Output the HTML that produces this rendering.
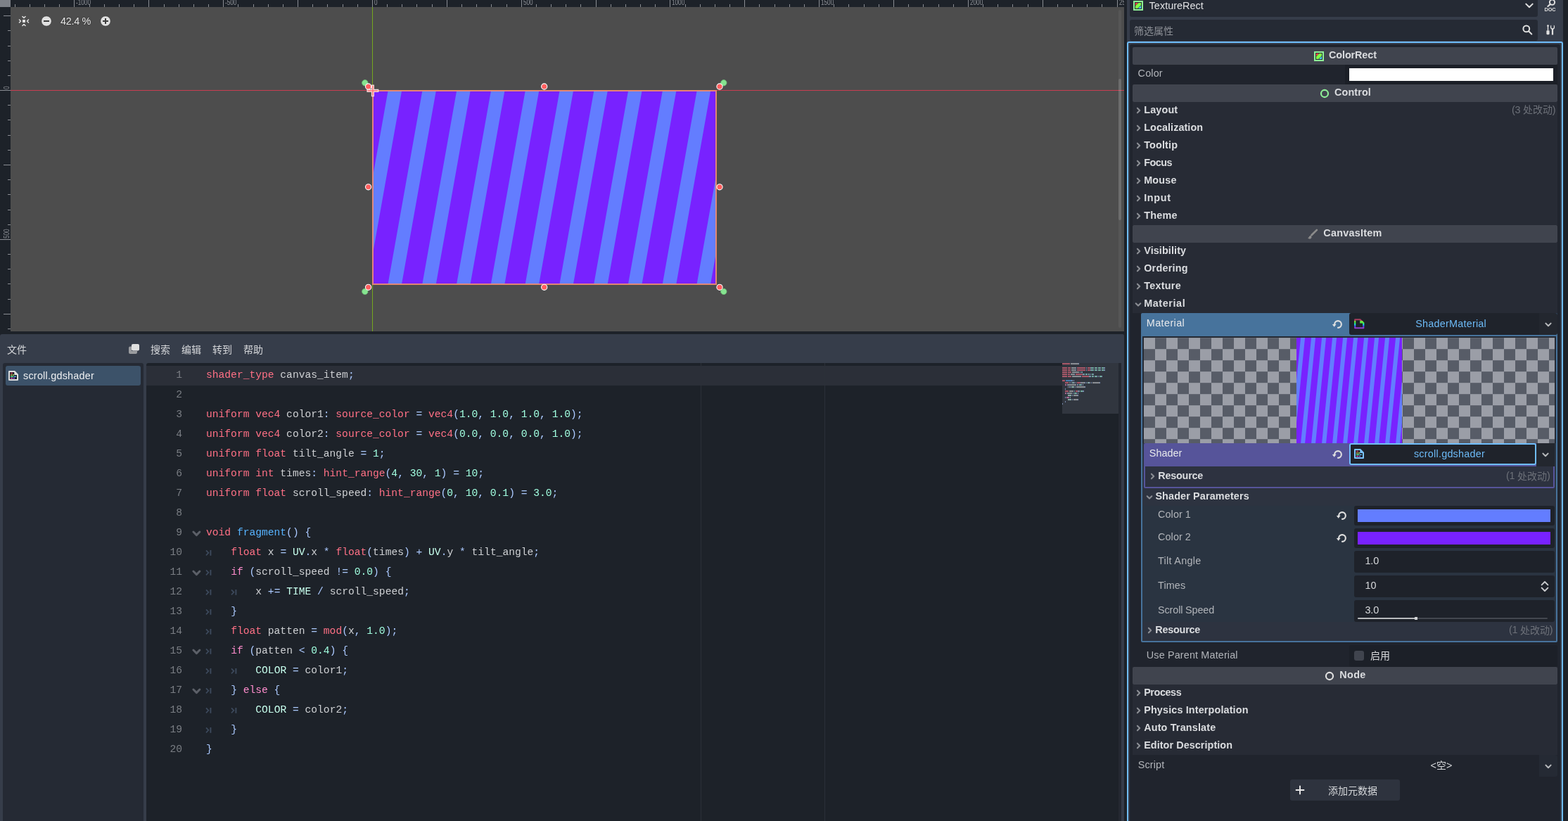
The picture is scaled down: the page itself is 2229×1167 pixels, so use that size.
<!DOCTYPE html>
<html lang="zh"><head><meta charset="utf-8"><title>Godot shader editor</title><style>
html,body{margin:0;padding:0;font-family:"Liberation Sans",sans-serif}
body{width:2229px;height:1167px;overflow:hidden;background:#1d2229;position:relative;font-family:"Liberation Sans",sans-serif}
#r{position:absolute;left:0;top:0;width:2229px;height:1167px;overflow:hidden;will-change:transform}
#r div,#r svg,#r span{position:absolute;box-sizing:border-box}
#r svg{overflow:visible}
#r span span{position:static}
.t{font-family:"Liberation Sans",sans-serif;font-size:14.4px;line-height:16px;white-space:pre}
.m{font-family:"Liberation Mono",monospace;font-size:14.64px;line-height:16px;white-space:pre;color:#cdcfd2}
.rl{font-family:"Liberation Sans",sans-serif;font-size:10px;line-height:10px;color:#8c8f95;transform:scaleX(0.82);transform-origin:0 0;white-space:pre}
.rv{font-family:"Liberation Sans",sans-serif;font-size:10px;line-height:10px;color:#8c8f95;transform:rotate(-90deg) scaleX(0.8);transform-origin:0 0;white-space:pre}
.cj{font-family:"Liberation Sans","Noto Sans CJK SC",sans-serif;font-size:14px}
</style></head><body><div id="r">
<div style="left:0px;top:0px;width:1598px;height:471px;background:#1d2229;"></div>
<div style="left:15px;top:10px;width:1583px;height:461px;background:#4d4d4d;"></div>
<div style="left:0px;top:0px;width:15px;height:10px;background:#7c8087;"></div>
<svg style="left:0px;top:0px;" width="1598" height="10"><g fill="#8a8d93"><rect x="21" y="6" width="1" height="4"/><rect x="42" y="6" width="1" height="4"/><rect x="63" y="6" width="1" height="4"/><rect x="84" y="6" width="1" height="4"/><rect x="105" y="0" width="1" height="10"/><rect x="127" y="6" width="1" height="4"/><rect x="148" y="6" width="1" height="4"/><rect x="169" y="6" width="1" height="4"/><rect x="190" y="6" width="1" height="4"/><rect x="211" y="0" width="1" height="10"/><rect x="233" y="6" width="1" height="4"/><rect x="254" y="6" width="1" height="4"/><rect x="275" y="6" width="1" height="4"/><rect x="296" y="6" width="1" height="4"/><rect x="317" y="0" width="1" height="10"/><rect x="338" y="6" width="1" height="4"/><rect x="360" y="6" width="1" height="4"/><rect x="381" y="6" width="1" height="4"/><rect x="402" y="6" width="1" height="4"/><rect x="423" y="0" width="1" height="10"/><rect x="444" y="6" width="1" height="4"/><rect x="465" y="6" width="1" height="4"/><rect x="487" y="6" width="1" height="4"/><rect x="508" y="6" width="1" height="4"/><rect x="529" y="0" width="1" height="10"/><rect x="550" y="6" width="1" height="4"/><rect x="571" y="6" width="1" height="4"/><rect x="592" y="6" width="1" height="4"/><rect x="614" y="6" width="1" height="4"/><rect x="635" y="0" width="1" height="10"/><rect x="656" y="6" width="1" height="4"/><rect x="677" y="6" width="1" height="4"/><rect x="698" y="6" width="1" height="4"/><rect x="720" y="6" width="1" height="4"/><rect x="741" y="0" width="1" height="10"/><rect x="762" y="6" width="1" height="4"/><rect x="783" y="6" width="1" height="4"/><rect x="804" y="6" width="1" height="4"/><rect x="825" y="6" width="1" height="4"/><rect x="847" y="0" width="1" height="10"/><rect x="868" y="6" width="1" height="4"/><rect x="889" y="6" width="1" height="4"/><rect x="910" y="6" width="1" height="4"/><rect x="931" y="6" width="1" height="4"/><rect x="952" y="0" width="1" height="10"/><rect x="974" y="6" width="1" height="4"/><rect x="995" y="6" width="1" height="4"/><rect x="1016" y="6" width="1" height="4"/><rect x="1037" y="6" width="1" height="4"/><rect x="1058" y="0" width="1" height="10"/><rect x="1079" y="6" width="1" height="4"/><rect x="1101" y="6" width="1" height="4"/><rect x="1122" y="6" width="1" height="4"/><rect x="1143" y="6" width="1" height="4"/><rect x="1164" y="0" width="1" height="10"/><rect x="1185" y="6" width="1" height="4"/><rect x="1206" y="6" width="1" height="4"/><rect x="1228" y="6" width="1" height="4"/><rect x="1249" y="6" width="1" height="4"/><rect x="1270" y="0" width="1" height="10"/><rect x="1291" y="6" width="1" height="4"/><rect x="1312" y="6" width="1" height="4"/><rect x="1334" y="6" width="1" height="4"/><rect x="1355" y="6" width="1" height="4"/><rect x="1376" y="0" width="1" height="10"/><rect x="1397" y="6" width="1" height="4"/><rect x="1418" y="6" width="1" height="4"/><rect x="1439" y="6" width="1" height="4"/><rect x="1461" y="6" width="1" height="4"/><rect x="1482" y="0" width="1" height="10"/><rect x="1503" y="6" width="1" height="4"/><rect x="1524" y="6" width="1" height="4"/><rect x="1545" y="6" width="1" height="4"/><rect x="1566" y="6" width="1" height="4"/><rect x="1588" y="0" width="1" height="10"/></g></svg>
<svg style="left:0px;top:10px;" width="15" height="461"><g fill="#8a8d93" transform="translate(0,-10)"><rect x="5" y="22" width="10" height="1"/><rect x="11" y="43" width="4" height="1"/><rect x="11" y="65" width="4" height="1"/><rect x="11" y="86" width="4" height="1"/><rect x="11" y="107" width="4" height="1"/><rect x="0" y="128" width="15" height="1"/><rect x="11" y="149" width="4" height="1"/><rect x="11" y="170" width="4" height="1"/><rect x="11" y="192" width="4" height="1"/><rect x="11" y="213" width="4" height="1"/><rect x="5" y="234" width="10" height="1"/><rect x="11" y="255" width="4" height="1"/><rect x="11" y="276" width="4" height="1"/><rect x="11" y="298" width="4" height="1"/><rect x="11" y="319" width="4" height="1"/><rect x="0" y="340" width="15" height="1"/><rect x="11" y="361" width="4" height="1"/><rect x="11" y="382" width="4" height="1"/><rect x="11" y="403" width="4" height="1"/><rect x="11" y="425" width="4" height="1"/><rect x="5" y="446" width="10" height="1"/><rect x="11" y="467" width="4" height="1"/></g></svg>
<span class="rl" style="left:108.3px;top:-0.9px">-1000</span>
<span class="rl" style="left:320.3px;top:-0.9px">-500</span>
<span class="rl" style="left:532.3px;top:-0.9px">0</span>
<span class="rl" style="left:744.3px;top:-0.9px">500</span>
<span class="rl" style="left:955.3px;top:-0.9px">1000</span>
<span class="rl" style="left:1167.3px;top:-0.9px">1500</span>
<span class="rl" style="left:1379.3px;top:-0.9px">2000</span>
<span class="rl" style="left:1591.3px;top:-0.9px">2500</span>
<span class="rv" style="left:4.9px;top:127.1px">0</span>
<span class="rv" style="left:4.9px;top:338.8px">500</span>
<div style="left:15px;top:128px;width:1583px;height:1px;background:#c73d52;"></div>
<div style="left:529px;top:10px;width:1px;height:461px;background:#74a81e;"></div>
<svg style="left:529.4px;top:128.6px;overflow:hidden" width="488.8" height="275.6"><rect width="489.84" height="276.41" fill="#7822ff"/><path fill="#637dff" d="M-74.97 0L-55.45 0L-105.21 279.90L-124.73 279.90ZM-26.18 0L-6.67 0L-56.43 279.90L-75.94 279.90ZM22.60 0L42.11 0L-7.65 279.90L-27.16 279.90ZM71.38 0L90.90 0L41.14 279.90L21.62 279.90ZM120.17 0L139.68 0L89.92 279.90L70.41 279.90ZM168.95 0L188.46 0L138.71 279.90L119.19 279.90ZM217.73 0L237.25 0L187.49 279.90L167.98 279.90ZM266.52 0L286.03 0L236.27 279.90L216.76 279.90ZM315.30 0L334.82 0L285.06 279.90L265.54 279.90ZM364.09 0L383.60 0L333.84 279.90L314.33 279.90ZM412.87 0L432.38 0L382.62 279.90L363.11 279.90ZM461.65 0L481.17 0L431.41 279.90L411.89 279.90ZM510.44 0L529.95 0L480.19 279.90L460.68 279.90ZM559.22 0L578.73 0L528.98 279.90L509.46 279.90ZM608.00 0L627.52 0L577.76 279.90L558.25 279.90Z"/></svg>
<div style="left:529px;top:128px;width:490px;height:277px;border:2px solid rgba(238,140,112,0.9)"></div>
<svg style="left:0px;top:0px;" width="1598" height="471"><circle cx="518.8" cy="117.8" r="4.2" fill="#86e490" stroke="#6bbf75" stroke-width="0.8"/><circle cx="1028.8" cy="117.8" r="4.2" fill="#86e490" stroke="#6bbf75" stroke-width="0.8"/><circle cx="518.8" cy="414.4" r="4.2" fill="#86e490" stroke="#6bbf75" stroke-width="0.8"/><circle cx="1028.8" cy="414.4" r="4.2" fill="#86e490" stroke="#6bbf75" stroke-width="0.8"/><circle cx="523.6" cy="123.0" r="4.1" fill="#ff5f5f" stroke="#fff" stroke-width="1.1"/><circle cx="773.7" cy="123.0" r="4.1" fill="#ff5f5f" stroke="#fff" stroke-width="1.1"/><circle cx="1023.0" cy="123.0" r="4.1" fill="#ff5f5f" stroke="#fff" stroke-width="1.1"/><circle cx="523.6" cy="265.8" r="4.1" fill="#ff5f5f" stroke="#fff" stroke-width="1.1"/><circle cx="1023.0" cy="265.8" r="4.1" fill="#ff5f5f" stroke="#fff" stroke-width="1.1"/><circle cx="523.6" cy="408.3" r="4.1" fill="#ff5f5f" stroke="#fff" stroke-width="1.1"/><circle cx="773.7" cy="408.3" r="4.1" fill="#ff5f5f" stroke="#fff" stroke-width="1.1"/><circle cx="1023.0" cy="408.3" r="4.1" fill="#ff5f5f" stroke="#fff" stroke-width="1.1"/><g transform="translate(529.9,128.9)"><path d="M-1.4 -7.8h2.8v6.4h6.4v2.8h-6.4v6.4h-2.8v-6.4h-6.4v-2.8h6.4z" fill="#fb7575" stroke="#f3dcdc" stroke-width="1.3"/></g></svg>
<div style="left:1590px;top:14px;width:4px;height:452px;background:rgba(255,255,255,0.05);border-radius:2px"></div>
<div style="left:1590px;top:112px;width:4px;height:201px;background:rgba(255,255,255,0.14);border-radius:2px"></div>
<svg style="left:26px;top:22px;" width="16" height="16"><g fill="none" stroke="#e0e0e0" stroke-width="1.6" stroke-linecap="round" stroke-linejoin="round"><path d="M6 1.5l2 2l2-2M6 14.5l2-2l2 2M1.5 6l2 2l-2 2M14.5 6l-2 2l2 2"/></g><rect x="6" y="6" width="4" height="4" fill="#e0e0e0"/></svg>
<svg style="left:58px;top:22px;" width="16" height="16"><circle cx="8" cy="8" r="7.3" fill="#e0e0e0" stroke="#3a3a3a" stroke-width="0.8"/><rect x="4" y="7" width="8" height="2" fill="#3c3c3c"/></svg>
<svg style="left:142px;top:22px;" width="16" height="16"><circle cx="8" cy="8" r="7.3" fill="#e0e0e0" stroke="#3a3a3a" stroke-width="0.8"/><path d="M4 7h3v-3h2v3h3v2h-3v3h-2v-3h-3z" fill="#3c3c3c"/></svg>
<span class="t" style="left:86.00px;top:22.00px;color:#e6e6e6;letter-spacing:-0.292px;text-shadow:0 0 1px #333,0 0 2px #333;">42.4 %</span>
<div style="left:0px;top:475px;width:1598px;height:702px;background:#363d4a;border-radius:3px 2px 0 0"></div>
<svg style="left:6.3px;top:484px" width="36" height="27.6"><text class="cj" x="4" y="18" fill="#d4d6d9">文件</text></svg>
<svg style="left:183px;top:489px;" width="15" height="14"><rect x="4" y="0" width="11" height="9.5" rx="2" fill="#e0e0e0"/><rect x="5.5" y="2.6" width="8" height="5.4" fill="#e0e0e0"/><path d="M2 3.5h2v6.5h8v2a2 2 0 0 1-2 2h-8a2 2 0 0 1-2-2v-6.5a2 2 0 0 1 2-2z" fill="#9a9c9f"/></svg>
<svg style="left:210.2px;top:484px" width="36" height="27.6"><text class="cj" x="4" y="18" fill="#d4d6d9">搜索</text></svg>
<svg style="left:254.2px;top:484px" width="36" height="27.6"><text class="cj" x="4" y="18" fill="#d4d6d9">编辑</text></svg>
<svg style="left:298.2px;top:484px" width="36" height="27.6"><text class="cj" x="4" y="18" fill="#d4d6d9">转到</text></svg>
<svg style="left:342.2px;top:484px" width="36" height="27.6"><text class="cj" x="4" y="18" fill="#d4d6d9">帮助</text></svg>
<div style="left:4px;top:516px;width:200px;height:661px;background:#252a34;border-radius:3px"></div>
<div style="left:8px;top:520px;width:192px;height:27.7px;background:#3c5269;border-radius:3px"></div>
<svg style="left:12px;top:527px;" width="14" height="14"><path d="M1 1h7.6l4.4 4.4v7.6h-12z" fill="#1b1f27" stroke="#e0e0e0" stroke-width="2" stroke-linejoin="round"/><path d="M8.3 1v5h5z" fill="#e0e0e0"/><rect x="3" y="2.8" width="3.2" height="1.3" fill="#d04560"/><rect x="3" y="5.3" width="2" height="1.3" fill="#ffca5f"/><rect x="5.6" y="5.3" width="2.4" height="1.3" fill="#c5ef5f"/><rect x="3" y="7.6" width="4" height="1.3" fill="#5fffa5"/><rect x="7.6" y="7.6" width="3.2" height="1.3" fill="#5fc8ff"/><rect x="3" y="9.9" width="3" height="1.3" fill="#ff5fc8"/><rect x="6.6" y="9.9" width="2.4" height="1.3" fill="#9f5fff"/></svg>
<span class="t" style="left:33.00px;top:526.30px;color:#eceef0;letter-spacing:0.233px;">scroll.gdshader</span>
<div style="left:208px;top:516px;width:1386px;height:661px;background:#1d2229;border-radius:3px 3px 0 0"></div>
<div style="left:208px;top:520px;width:1302px;height:28px;background:#2b2f38;"></div>
<div style="left:996px;top:516px;width:1px;height:651px;background:#2b3038;"></div>
<div style="left:1172px;top:516px;width:1px;height:651px;background:#2b3038;"></div>
<div style="left:1590px;top:516px;width:4px;height:651px;background:#242831;"></div>
<span class="m" style="left:250.31px;top:525.00px;color:#7a7e84">1</span>
<span class="m" style="left:293.00px;top:525.00px"><span style="color:#ff7085">shader_type</span> <span style="color:#cdcfd2">canvas_item</span><span style="color:#abc9ff">;</span></span>
<span class="m" style="left:250.31px;top:553.00px;color:#7a7e84">2</span>
<span class="m" style="left:250.31px;top:581.00px;color:#7a7e84">3</span>
<span class="m" style="left:293.00px;top:581.00px"><span style="color:#ff7085">uniform</span> <span style="color:#ff7085">vec4</span> <span style="color:#cdcfd2">color1</span><span style="color:#abc9ff">:</span> <span style="color:#ff7085">source_color</span> <span style="color:#abc9ff">=</span> <span style="color:#ff7085">vec4</span><span style="color:#abc9ff">(</span><span style="color:#a1ffe0">1.0</span><span style="color:#abc9ff">,</span> <span style="color:#a1ffe0">1.0</span><span style="color:#abc9ff">,</span> <span style="color:#a1ffe0">1.0</span><span style="color:#abc9ff">,</span> <span style="color:#a1ffe0">1.0</span><span style="color:#abc9ff">)</span><span style="color:#abc9ff">;</span></span>
<span class="m" style="left:250.31px;top:609.00px;color:#7a7e84">4</span>
<span class="m" style="left:293.00px;top:609.00px"><span style="color:#ff7085">uniform</span> <span style="color:#ff7085">vec4</span> <span style="color:#cdcfd2">color2</span><span style="color:#abc9ff">:</span> <span style="color:#ff7085">source_color</span> <span style="color:#abc9ff">=</span> <span style="color:#ff7085">vec4</span><span style="color:#abc9ff">(</span><span style="color:#a1ffe0">0.0</span><span style="color:#abc9ff">,</span> <span style="color:#a1ffe0">0.0</span><span style="color:#abc9ff">,</span> <span style="color:#a1ffe0">0.0</span><span style="color:#abc9ff">,</span> <span style="color:#a1ffe0">1.0</span><span style="color:#abc9ff">)</span><span style="color:#abc9ff">;</span></span>
<span class="m" style="left:250.31px;top:637.00px;color:#7a7e84">5</span>
<span class="m" style="left:293.00px;top:637.00px"><span style="color:#ff7085">uniform</span> <span style="color:#ff7085">float</span> <span style="color:#cdcfd2">tilt_angle</span> <span style="color:#abc9ff">=</span> <span style="color:#a1ffe0">1</span><span style="color:#abc9ff">;</span></span>
<span class="m" style="left:250.31px;top:665.00px;color:#7a7e84">6</span>
<span class="m" style="left:293.00px;top:665.00px"><span style="color:#ff7085">uniform</span> <span style="color:#ff7085">int</span> <span style="color:#cdcfd2">times</span><span style="color:#abc9ff">:</span> <span style="color:#ff7085">hint_range</span><span style="color:#abc9ff">(</span><span style="color:#a1ffe0">4</span><span style="color:#abc9ff">,</span> <span style="color:#a1ffe0">30</span><span style="color:#abc9ff">,</span> <span style="color:#a1ffe0">1</span><span style="color:#abc9ff">)</span> <span style="color:#abc9ff">=</span> <span style="color:#a1ffe0">10</span><span style="color:#abc9ff">;</span></span>
<span class="m" style="left:250.31px;top:693.00px;color:#7a7e84">7</span>
<span class="m" style="left:293.00px;top:693.00px"><span style="color:#ff7085">uniform</span> <span style="color:#ff7085">float</span> <span style="color:#cdcfd2">scroll_speed</span><span style="color:#abc9ff">:</span> <span style="color:#ff7085">hint_range</span><span style="color:#abc9ff">(</span><span style="color:#a1ffe0">0</span><span style="color:#abc9ff">,</span> <span style="color:#a1ffe0">10</span><span style="color:#abc9ff">,</span> <span style="color:#a1ffe0">0.1</span><span style="color:#abc9ff">)</span> <span style="color:#abc9ff">=</span> <span style="color:#a1ffe0">3.0</span><span style="color:#abc9ff">;</span></span>
<span class="m" style="left:250.31px;top:721.00px;color:#7a7e84">8</span>
<span class="m" style="left:250.31px;top:749.00px;color:#7a7e84">9</span>
<svg style="left:273.3px;top:754.2px;" width="13" height="9"><path d="M1.9 2l4.5 4.6l4.5-4.6" fill="none" stroke="#5c6068" stroke-width="3" stroke-linecap="round" stroke-linejoin="round"/></svg>
<span class="m" style="left:293.00px;top:749.00px"><span style="color:#ff7085">void</span> <span style="color:#57b3ff">fragment</span><span style="color:#abc9ff">(</span><span style="color:#abc9ff">)</span> <span style="color:#abc9ff">{</span></span>
<span class="m" style="left:241.53px;top:777.00px;color:#7a7e84">10</span>
<svg style="left:292.4px;top:781px;" width="10" height="10"><path d="M1 1.3l3.4 3.5l-3.4 3.5" fill="none" stroke="#3d4a5d" stroke-width="1.7"/><path d="M7.4 1v7.8" stroke="#3d4a5d" stroke-width="1.9"/></svg>
<span class="m" style="left:328.15px;top:777.00px"><span style="color:#ff7085">float</span> <span style="color:#cdcfd2">x</span> <span style="color:#abc9ff">=</span> <span style="color:#c7ffed">UV</span><span style="color:#abc9ff">.</span><span style="color:#cdcfd2">x</span> <span style="color:#abc9ff">*</span> <span style="color:#ff7085">float</span><span style="color:#abc9ff">(</span><span style="color:#cdcfd2">times</span><span style="color:#abc9ff">)</span> <span style="color:#abc9ff">+</span> <span style="color:#c7ffed">UV</span><span style="color:#abc9ff">.</span><span style="color:#cdcfd2">y</span> <span style="color:#abc9ff">*</span> <span style="color:#cdcfd2">tilt_angle</span><span style="color:#abc9ff">;</span></span>
<span class="m" style="left:241.53px;top:805.00px;color:#7a7e84">11</span>
<svg style="left:273.3px;top:810.2px;" width="13" height="9"><path d="M1.9 2l4.5 4.6l4.5-4.6" fill="none" stroke="#5c6068" stroke-width="3" stroke-linecap="round" stroke-linejoin="round"/></svg>
<svg style="left:292.4px;top:809px;" width="10" height="10"><path d="M1 1.3l3.4 3.5l-3.4 3.5" fill="none" stroke="#3d4a5d" stroke-width="1.7"/><path d="M7.4 1v7.8" stroke="#3d4a5d" stroke-width="1.9"/></svg>
<span class="m" style="left:328.15px;top:805.00px"><span style="color:#ff8ccc">if</span> <span style="color:#abc9ff">(</span><span style="color:#cdcfd2">scroll_speed</span> <span style="color:#abc9ff">!</span><span style="color:#abc9ff">=</span> <span style="color:#a1ffe0">0.0</span><span style="color:#abc9ff">)</span> <span style="color:#abc9ff">{</span></span>
<span class="m" style="left:241.53px;top:833.00px;color:#7a7e84">12</span>
<svg style="left:292.4px;top:837px;" width="10" height="10"><path d="M1 1.3l3.4 3.5l-3.4 3.5" fill="none" stroke="#3d4a5d" stroke-width="1.7"/><path d="M7.4 1v7.8" stroke="#3d4a5d" stroke-width="1.9"/></svg>
<svg style="left:327.548px;top:837px;" width="10" height="10"><path d="M1 1.3l3.4 3.5l-3.4 3.5" fill="none" stroke="#3d4a5d" stroke-width="1.7"/><path d="M7.4 1v7.8" stroke="#3d4a5d" stroke-width="1.9"/></svg>
<span class="m" style="left:363.30px;top:833.00px"><span style="color:#cdcfd2">x</span> <span style="color:#abc9ff">+</span><span style="color:#abc9ff">=</span> <span style="color:#c7ffed">TIME</span> <span style="color:#abc9ff">/</span> <span style="color:#cdcfd2">scroll_speed</span><span style="color:#abc9ff">;</span></span>
<span class="m" style="left:241.53px;top:861.00px;color:#7a7e84">13</span>
<svg style="left:292.4px;top:865px;" width="10" height="10"><path d="M1 1.3l3.4 3.5l-3.4 3.5" fill="none" stroke="#3d4a5d" stroke-width="1.7"/><path d="M7.4 1v7.8" stroke="#3d4a5d" stroke-width="1.9"/></svg>
<span class="m" style="left:328.15px;top:861.00px"><span style="color:#abc9ff">}</span></span>
<span class="m" style="left:241.53px;top:889.00px;color:#7a7e84">14</span>
<svg style="left:292.4px;top:893px;" width="10" height="10"><path d="M1 1.3l3.4 3.5l-3.4 3.5" fill="none" stroke="#3d4a5d" stroke-width="1.7"/><path d="M7.4 1v7.8" stroke="#3d4a5d" stroke-width="1.9"/></svg>
<span class="m" style="left:328.15px;top:889.00px"><span style="color:#ff7085">float</span> <span style="color:#cdcfd2">patten</span> <span style="color:#abc9ff">=</span> <span style="color:#ff7085">mod</span><span style="color:#abc9ff">(</span><span style="color:#cdcfd2">x</span><span style="color:#abc9ff">,</span> <span style="color:#a1ffe0">1.0</span><span style="color:#abc9ff">)</span><span style="color:#abc9ff">;</span></span>
<span class="m" style="left:241.53px;top:917.00px;color:#7a7e84">15</span>
<svg style="left:273.3px;top:922.2px;" width="13" height="9"><path d="M1.9 2l4.5 4.6l4.5-4.6" fill="none" stroke="#5c6068" stroke-width="3" stroke-linecap="round" stroke-linejoin="round"/></svg>
<svg style="left:292.4px;top:921px;" width="10" height="10"><path d="M1 1.3l3.4 3.5l-3.4 3.5" fill="none" stroke="#3d4a5d" stroke-width="1.7"/><path d="M7.4 1v7.8" stroke="#3d4a5d" stroke-width="1.9"/></svg>
<span class="m" style="left:328.15px;top:917.00px"><span style="color:#ff8ccc">if</span> <span style="color:#abc9ff">(</span><span style="color:#cdcfd2">patten</span> <span style="color:#abc9ff">&lt;</span> <span style="color:#a1ffe0">0.4</span><span style="color:#abc9ff">)</span> <span style="color:#abc9ff">{</span></span>
<span class="m" style="left:241.53px;top:945.00px;color:#7a7e84">16</span>
<svg style="left:292.4px;top:949px;" width="10" height="10"><path d="M1 1.3l3.4 3.5l-3.4 3.5" fill="none" stroke="#3d4a5d" stroke-width="1.7"/><path d="M7.4 1v7.8" stroke="#3d4a5d" stroke-width="1.9"/></svg>
<svg style="left:327.548px;top:949px;" width="10" height="10"><path d="M1 1.3l3.4 3.5l-3.4 3.5" fill="none" stroke="#3d4a5d" stroke-width="1.7"/><path d="M7.4 1v7.8" stroke="#3d4a5d" stroke-width="1.9"/></svg>
<span class="m" style="left:363.30px;top:945.00px"><span style="color:#c7ffed">COLOR</span> <span style="color:#abc9ff">=</span> <span style="color:#cdcfd2">color1</span><span style="color:#abc9ff">;</span></span>
<span class="m" style="left:241.53px;top:973.00px;color:#7a7e84">17</span>
<svg style="left:273.3px;top:978.2px;" width="13" height="9"><path d="M1.9 2l4.5 4.6l4.5-4.6" fill="none" stroke="#5c6068" stroke-width="3" stroke-linecap="round" stroke-linejoin="round"/></svg>
<svg style="left:292.4px;top:977px;" width="10" height="10"><path d="M1 1.3l3.4 3.5l-3.4 3.5" fill="none" stroke="#3d4a5d" stroke-width="1.7"/><path d="M7.4 1v7.8" stroke="#3d4a5d" stroke-width="1.9"/></svg>
<span class="m" style="left:328.15px;top:973.00px"><span style="color:#abc9ff">}</span> <span style="color:#ff8ccc">else</span> <span style="color:#abc9ff">{</span></span>
<span class="m" style="left:241.53px;top:1001.00px;color:#7a7e84">18</span>
<svg style="left:292.4px;top:1005px;" width="10" height="10"><path d="M1 1.3l3.4 3.5l-3.4 3.5" fill="none" stroke="#3d4a5d" stroke-width="1.7"/><path d="M7.4 1v7.8" stroke="#3d4a5d" stroke-width="1.9"/></svg>
<svg style="left:327.548px;top:1005px;" width="10" height="10"><path d="M1 1.3l3.4 3.5l-3.4 3.5" fill="none" stroke="#3d4a5d" stroke-width="1.7"/><path d="M7.4 1v7.8" stroke="#3d4a5d" stroke-width="1.9"/></svg>
<span class="m" style="left:363.30px;top:1001.00px"><span style="color:#c7ffed">COLOR</span> <span style="color:#abc9ff">=</span> <span style="color:#cdcfd2">color2</span><span style="color:#abc9ff">;</span></span>
<span class="m" style="left:241.53px;top:1029.00px;color:#7a7e84">19</span>
<svg style="left:292.4px;top:1033px;" width="10" height="10"><path d="M1 1.3l3.4 3.5l-3.4 3.5" fill="none" stroke="#3d4a5d" stroke-width="1.7"/><path d="M7.4 1v7.8" stroke="#3d4a5d" stroke-width="1.9"/></svg>
<span class="m" style="left:328.15px;top:1029.00px"><span style="color:#abc9ff">}</span></span>
<span class="m" style="left:241.53px;top:1057.00px;color:#7a7e84">20</span>
<span class="m" style="left:293.00px;top:1057.00px"><span style="color:#abc9ff">}</span></span>
<div style="left:1510px;top:516px;width:80px;height:72px;background:#31363f;"></div>
<svg style="left:1510px;top:516px;" width="80" height="72"><g opacity="0.6"><rect x="0" y="0.1" width="11" height="2" fill="#ff7085"/><rect x="12" y="0.1" width="11" height="2" fill="#cdcfd2"/><rect x="23" y="0.1" width="1" height="2" fill="#abc9ff"/><rect x="0" y="6.1" width="7" height="2" fill="#ff7085"/><rect x="8" y="6.1" width="4" height="2" fill="#ff7085"/><rect x="13" y="6.1" width="6" height="2" fill="#cdcfd2"/><rect x="19" y="6.1" width="1" height="2" fill="#abc9ff"/><rect x="21" y="6.1" width="12" height="2" fill="#ff7085"/><rect x="34" y="6.1" width="1" height="2" fill="#abc9ff"/><rect x="36" y="6.1" width="4" height="2" fill="#ff7085"/><rect x="40" y="6.1" width="1" height="2" fill="#abc9ff"/><rect x="41" y="6.1" width="3" height="2" fill="#a1ffe0"/><rect x="44" y="6.1" width="1" height="2" fill="#abc9ff"/><rect x="46" y="6.1" width="3" height="2" fill="#a1ffe0"/><rect x="49" y="6.1" width="1" height="2" fill="#abc9ff"/><rect x="51" y="6.1" width="3" height="2" fill="#a1ffe0"/><rect x="54" y="6.1" width="1" height="2" fill="#abc9ff"/><rect x="56" y="6.1" width="3" height="2" fill="#a1ffe0"/><rect x="59" y="6.1" width="1" height="2" fill="#abc9ff"/><rect x="60" y="6.1" width="1" height="2" fill="#abc9ff"/><rect x="0" y="9.1" width="7" height="2" fill="#ff7085"/><rect x="8" y="9.1" width="4" height="2" fill="#ff7085"/><rect x="13" y="9.1" width="6" height="2" fill="#cdcfd2"/><rect x="19" y="9.1" width="1" height="2" fill="#abc9ff"/><rect x="21" y="9.1" width="12" height="2" fill="#ff7085"/><rect x="34" y="9.1" width="1" height="2" fill="#abc9ff"/><rect x="36" y="9.1" width="4" height="2" fill="#ff7085"/><rect x="40" y="9.1" width="1" height="2" fill="#abc9ff"/><rect x="41" y="9.1" width="3" height="2" fill="#a1ffe0"/><rect x="44" y="9.1" width="1" height="2" fill="#abc9ff"/><rect x="46" y="9.1" width="3" height="2" fill="#a1ffe0"/><rect x="49" y="9.1" width="1" height="2" fill="#abc9ff"/><rect x="51" y="9.1" width="3" height="2" fill="#a1ffe0"/><rect x="54" y="9.1" width="1" height="2" fill="#abc9ff"/><rect x="56" y="9.1" width="3" height="2" fill="#a1ffe0"/><rect x="59" y="9.1" width="1" height="2" fill="#abc9ff"/><rect x="60" y="9.1" width="1" height="2" fill="#abc9ff"/><rect x="0" y="12.1" width="7" height="2" fill="#ff7085"/><rect x="8" y="12.1" width="5" height="2" fill="#ff7085"/><rect x="14" y="12.1" width="10" height="2" fill="#cdcfd2"/><rect x="25" y="12.1" width="1" height="2" fill="#abc9ff"/><rect x="27" y="12.1" width="1" height="2" fill="#a1ffe0"/><rect x="28" y="12.1" width="1" height="2" fill="#abc9ff"/><rect x="0" y="15.1" width="7" height="2" fill="#ff7085"/><rect x="8" y="15.1" width="3" height="2" fill="#ff7085"/><rect x="12" y="15.1" width="5" height="2" fill="#cdcfd2"/><rect x="17" y="15.1" width="1" height="2" fill="#abc9ff"/><rect x="19" y="15.1" width="10" height="2" fill="#ff7085"/><rect x="29" y="15.1" width="1" height="2" fill="#abc9ff"/><rect x="30" y="15.1" width="1" height="2" fill="#a1ffe0"/><rect x="31" y="15.1" width="1" height="2" fill="#abc9ff"/><rect x="33" y="15.1" width="2" height="2" fill="#a1ffe0"/><rect x="35" y="15.1" width="1" height="2" fill="#abc9ff"/><rect x="37" y="15.1" width="1" height="2" fill="#a1ffe0"/><rect x="38" y="15.1" width="1" height="2" fill="#abc9ff"/><rect x="40" y="15.1" width="1" height="2" fill="#abc9ff"/><rect x="42" y="15.1" width="2" height="2" fill="#a1ffe0"/><rect x="44" y="15.1" width="1" height="2" fill="#abc9ff"/><rect x="0" y="18.1" width="7" height="2" fill="#ff7085"/><rect x="8" y="18.1" width="5" height="2" fill="#ff7085"/><rect x="14" y="18.1" width="12" height="2" fill="#cdcfd2"/><rect x="26" y="18.1" width="1" height="2" fill="#abc9ff"/><rect x="28" y="18.1" width="10" height="2" fill="#ff7085"/><rect x="38" y="18.1" width="1" height="2" fill="#abc9ff"/><rect x="39" y="18.1" width="1" height="2" fill="#a1ffe0"/><rect x="40" y="18.1" width="1" height="2" fill="#abc9ff"/><rect x="42" y="18.1" width="2" height="2" fill="#a1ffe0"/><rect x="44" y="18.1" width="1" height="2" fill="#abc9ff"/><rect x="46" y="18.1" width="3" height="2" fill="#a1ffe0"/><rect x="49" y="18.1" width="1" height="2" fill="#abc9ff"/><rect x="51" y="18.1" width="1" height="2" fill="#abc9ff"/><rect x="53" y="18.1" width="3" height="2" fill="#a1ffe0"/><rect x="56" y="18.1" width="1" height="2" fill="#abc9ff"/><rect x="0" y="24.1" width="4" height="2" fill="#ff7085"/><rect x="5" y="24.1" width="8" height="2" fill="#57b3ff"/><rect x="13" y="24.1" width="1" height="2" fill="#abc9ff"/><rect x="14" y="24.1" width="1" height="2" fill="#abc9ff"/><rect x="16" y="24.1" width="1" height="2" fill="#abc9ff"/><rect x="4" y="27.1" width="5" height="2" fill="#ff7085"/><rect x="10" y="27.1" width="1" height="2" fill="#cdcfd2"/><rect x="12" y="27.1" width="1" height="2" fill="#abc9ff"/><rect x="14" y="27.1" width="2" height="2" fill="#c7ffed"/><rect x="16" y="27.1" width="1" height="2" fill="#abc9ff"/><rect x="17" y="27.1" width="1" height="2" fill="#cdcfd2"/><rect x="19" y="27.1" width="1" height="2" fill="#abc9ff"/><rect x="21" y="27.1" width="5" height="2" fill="#ff7085"/><rect x="26" y="27.1" width="1" height="2" fill="#abc9ff"/><rect x="27" y="27.1" width="5" height="2" fill="#cdcfd2"/><rect x="32" y="27.1" width="1" height="2" fill="#abc9ff"/><rect x="34" y="27.1" width="1" height="2" fill="#abc9ff"/><rect x="36" y="27.1" width="2" height="2" fill="#c7ffed"/><rect x="38" y="27.1" width="1" height="2" fill="#abc9ff"/><rect x="39" y="27.1" width="1" height="2" fill="#cdcfd2"/><rect x="41" y="27.1" width="1" height="2" fill="#abc9ff"/><rect x="43" y="27.1" width="10" height="2" fill="#cdcfd2"/><rect x="53" y="27.1" width="1" height="2" fill="#abc9ff"/><rect x="4" y="30.1" width="2" height="2" fill="#ff8ccc"/><rect x="7" y="30.1" width="1" height="2" fill="#abc9ff"/><rect x="8" y="30.1" width="12" height="2" fill="#cdcfd2"/><rect x="21" y="30.1" width="1" height="2" fill="#abc9ff"/><rect x="22" y="30.1" width="1" height="2" fill="#abc9ff"/><rect x="24" y="30.1" width="3" height="2" fill="#a1ffe0"/><rect x="27" y="30.1" width="1" height="2" fill="#abc9ff"/><rect x="29" y="30.1" width="1" height="2" fill="#abc9ff"/><rect x="8" y="33.1" width="1" height="2" fill="#cdcfd2"/><rect x="10" y="33.1" width="1" height="2" fill="#abc9ff"/><rect x="11" y="33.1" width="1" height="2" fill="#abc9ff"/><rect x="13" y="33.1" width="4" height="2" fill="#c7ffed"/><rect x="18" y="33.1" width="1" height="2" fill="#abc9ff"/><rect x="20" y="33.1" width="12" height="2" fill="#cdcfd2"/><rect x="32" y="33.1" width="1" height="2" fill="#abc9ff"/><rect x="4" y="36.1" width="1" height="2" fill="#abc9ff"/><rect x="4" y="39.1" width="5" height="2" fill="#ff7085"/><rect x="10" y="39.1" width="6" height="2" fill="#cdcfd2"/><rect x="17" y="39.1" width="1" height="2" fill="#abc9ff"/><rect x="19" y="39.1" width="3" height="2" fill="#ff7085"/><rect x="22" y="39.1" width="1" height="2" fill="#abc9ff"/><rect x="23" y="39.1" width="1" height="2" fill="#cdcfd2"/><rect x="24" y="39.1" width="1" height="2" fill="#abc9ff"/><rect x="26" y="39.1" width="3" height="2" fill="#a1ffe0"/><rect x="29" y="39.1" width="1" height="2" fill="#abc9ff"/><rect x="30" y="39.1" width="1" height="2" fill="#abc9ff"/><rect x="4" y="42.1" width="2" height="2" fill="#ff8ccc"/><rect x="7" y="42.1" width="1" height="2" fill="#abc9ff"/><rect x="8" y="42.1" width="6" height="2" fill="#cdcfd2"/><rect x="15" y="42.1" width="1" height="2" fill="#abc9ff"/><rect x="17" y="42.1" width="3" height="2" fill="#a1ffe0"/><rect x="20" y="42.1" width="1" height="2" fill="#abc9ff"/><rect x="22" y="42.1" width="1" height="2" fill="#abc9ff"/><rect x="8" y="45.1" width="5" height="2" fill="#c7ffed"/><rect x="14" y="45.1" width="1" height="2" fill="#abc9ff"/><rect x="16" y="45.1" width="6" height="2" fill="#cdcfd2"/><rect x="22" y="45.1" width="1" height="2" fill="#abc9ff"/><rect x="4" y="48.1" width="1" height="2" fill="#abc9ff"/><rect x="6" y="48.1" width="4" height="2" fill="#ff8ccc"/><rect x="11" y="48.1" width="1" height="2" fill="#abc9ff"/><rect x="8" y="51.1" width="5" height="2" fill="#c7ffed"/><rect x="14" y="51.1" width="1" height="2" fill="#abc9ff"/><rect x="16" y="51.1" width="6" height="2" fill="#cdcfd2"/><rect x="22" y="51.1" width="1" height="2" fill="#abc9ff"/><rect x="4" y="54.1" width="1" height="2" fill="#abc9ff"/><rect x="0" y="57.1" width="1" height="2" fill="#abc9ff"/></g></svg>
<div style="left:1602px;top:0px;width:620px;height:1167px;background:#363d4a;"></div>
<div style="left:1606px;top:-6px;width:580px;height:29.7px;background:#252a34;border-radius:3px"></div>
<div style="left:1606px;top:28.2px;width:580px;height:30.2px;background:#252a34;border-radius:3px"></div>
<svg style="left:1611px;top:1.3px;" width="14" height="14"><rect x="1" y="1" width="12" height="12" fill="#2b2f38" stroke="#8eef97" stroke-width="2"/><path d="M3 3h4l-4 4z" fill="#ff4545"/><path d="M7.6 3h3.4v3.2l-4.8 4.8h-3.2v-3.4z" fill="#80ff45"/><path d="M11 7v4h-4z" fill="#45d7ff"/></svg>
<span class="t" style="left:1633.60px;top:0.00px;color:#dfe0e2;letter-spacing:0.048px;">TextureRect</span>
<svg style="left:2168px;top:4px;" width="12" height="9"><path d="M1.3 1.6l4.7 4.7l4.7-4.7" fill="none" stroke="#e0e0e0" stroke-width="2" stroke-linecap="round" stroke-linejoin="round"/></svg>
<svg style="left:2195px;top:-2px;" width="18" height="19"><circle cx="11.5" cy="5.2" r="3.6" fill="none" stroke="#e0e0e0" stroke-width="2"/><path d="M8.8 8l-3.4 3" stroke="#e0e0e0" stroke-width="2.2" stroke-linecap="round"/><text x="0.6" y="17.6" font-family="Liberation Sans" font-weight="700" font-size="7.2" fill="#e0e0e0" letter-spacing="-0.1">DOC</text></svg>
<svg style="left:1608.4px;top:31px" width="64" height="27.6"><text class="cj" x="4" y="18" fill="#8d9097">筛选属性</text></svg>
<svg style="left:2163px;top:34px;" width="16" height="16"><circle cx="6.8" cy="6.9" r="4.4" fill="none" stroke="#e0e0e0" stroke-width="2"/><path d="M10 10.2l4.3 4.3" stroke="#e0e0e0" stroke-width="2" stroke-linecap="round"/></svg>
<svg style="left:2197px;top:35px;" width="14" height="16"><g fill="#e0e0e0"><path d="M2.2 1l1.3-1l1.3 1v1.5h-0.6v6h1.4v4.2a1.6 1.6 0 0 1-1.6 1.6h-1a1.6 1.6 0 0 1-1.6-1.6v-4.2h1.4v-6h-0.6z"/><path d="M8.2 0.6v3.6l1 1h1.6l1-1v-3.6l1.2 1.2v3.2l-1.9 1.9v7.6h-2.2v-7.6l-1.9-1.9v-3.2z"/></g></svg>
<div style="left:1602px;top:59px;width:620px;height:1167px;border:2px solid #6fbdfb;border-radius:3px;background:#363d4a"></div>
<div style="left:1605.6px;top:62.6px;width:612.4px;height:1167px;background:#20242d;border-radius:2px"></div>
<div style="left:1610px;top:66.7px;width:604px;height:25.3px;background:#40444e;border-radius:2px"></div>
<svg style="left:1868.2px;top:72.9px" width="14" height="14"><rect x="1" y="1" width="12" height="12" fill="#2b2f38" stroke="#8eef97" stroke-width="2"/><path d="M3 3h4l-4 4z" fill="#ff4545"/><path d="M7.6 3h3.4v3.2l-4.8 4.8h-3.2v-3.4z" fill="#80ff45"/><path d="M11 7v4h-4z" fill="#45d7ff"/></svg><span class="t" style="left:1889.07px;top:69.90px;color:#dadcdf;font-weight:700;letter-spacing:-0.111px;">ColorRect</span>
<div style="left:1610px;top:92px;width:302px;height:27.8px;background:#20242d;"></div>
<div style="left:1912px;top:92px;width:302px;height:27.8px;background:#1b1f27;"></div>
<span class="t" style="left:1617.60px;top:96.40px;color:#b1b4b9;letter-spacing:0.159px;">Color</span>
<div style="left:1918px;top:97px;width:290px;height:18px;background:#ffffff;"></div>
<div style="left:1610px;top:119.8px;width:604px;height:25.2px;background:#40444e;border-radius:2px"></div>
<svg style="left:1875.1px;top:125.0px" width="16" height="16"><circle cx="8" cy="8" r="5.05" fill="none" stroke="#8eef97" stroke-width="2.2"/></svg><span class="t" style="left:1897.04px;top:123.00px;color:#dadcdf;font-weight:700;letter-spacing:0.096px;">Control</span>
<div style="left:1610px;top:145px;width:604px;height:25px;background:#272b35;"></div>
<svg style="left:1615px;top:151.7px;" width="7" height="10"><path d="M1.9 1.7l3.3 3.3l-3.3 3.3" fill="none" stroke="#8b8e94" stroke-width="2.1" stroke-linecap="round" stroke-linejoin="round"/></svg>
<span class="t" style="left:1626.20px;top:147.80px;color:#dadcdf;font-weight:700;letter-spacing:0.161px;">Layout</span>
<div style="left:1610px;top:170px;width:604px;height:25px;background:#272b35;"></div>
<svg style="left:1615px;top:176.7px;" width="7" height="10"><path d="M1.9 1.7l3.3 3.3l-3.3 3.3" fill="none" stroke="#8b8e94" stroke-width="2.1" stroke-linecap="round" stroke-linejoin="round"/></svg>
<span class="t" style="left:1626.20px;top:172.80px;color:#dadcdf;font-weight:700;letter-spacing:0.066px;">Localization</span>
<div style="left:1610px;top:195px;width:604px;height:25px;background:#272b35;"></div>
<svg style="left:1615px;top:201.7px;" width="7" height="10"><path d="M1.9 1.7l3.3 3.3l-3.3 3.3" fill="none" stroke="#8b8e94" stroke-width="2.1" stroke-linecap="round" stroke-linejoin="round"/></svg>
<span class="t" style="left:1626.20px;top:197.80px;color:#dadcdf;font-weight:700;letter-spacing:0.143px;">Tooltip</span>
<div style="left:1610px;top:220px;width:604px;height:25px;background:#272b35;"></div>
<svg style="left:1615px;top:226.7px;" width="7" height="10"><path d="M1.9 1.7l3.3 3.3l-3.3 3.3" fill="none" stroke="#8b8e94" stroke-width="2.1" stroke-linecap="round" stroke-linejoin="round"/></svg>
<span class="t" style="left:1626.20px;top:222.80px;color:#dadcdf;font-weight:700;letter-spacing:-0.519px;">Focus</span>
<div style="left:1610px;top:245px;width:604px;height:25px;background:#272b35;"></div>
<svg style="left:1615px;top:251.7px;" width="7" height="10"><path d="M1.9 1.7l3.3 3.3l-3.3 3.3" fill="none" stroke="#8b8e94" stroke-width="2.1" stroke-linecap="round" stroke-linejoin="round"/></svg>
<span class="t" style="left:1626.20px;top:247.80px;color:#dadcdf;font-weight:700;letter-spacing:0.175px;">Mouse</span>
<div style="left:1610px;top:270px;width:604px;height:25px;background:#272b35;"></div>
<svg style="left:1615px;top:276.7px;" width="7" height="10"><path d="M1.9 1.7l3.3 3.3l-3.3 3.3" fill="none" stroke="#8b8e94" stroke-width="2.1" stroke-linecap="round" stroke-linejoin="round"/></svg>
<span class="t" style="left:1626.20px;top:272.80px;color:#dadcdf;font-weight:700;letter-spacing:0.681px;">Input</span>
<div style="left:1610px;top:295px;width:604px;height:25px;background:#272b35;"></div>
<svg style="left:1615px;top:301.7px;" width="7" height="10"><path d="M1.9 1.7l3.3 3.3l-3.3 3.3" fill="none" stroke="#8b8e94" stroke-width="2.1" stroke-linecap="round" stroke-linejoin="round"/></svg>
<span class="t" style="left:1626.20px;top:297.80px;color:#dadcdf;font-weight:700;letter-spacing:0.231px;">Theme</span>
<span class="t" style="left:2206.80px;top:147.80px;color:#6d7179;letter-spacing:-0.594px;">)</span>
<svg style="left:2160.7px;top:143.3px" width="50" height="27.6"><text class="cj" x="4" y="18" fill="#6d7179">处改动</text></svg>
<span class="t" style="left:2148.88px;top:147.80px;color:#6d7179;letter-spacing:-0.289px;">(3</span>
<div style="left:1610px;top:320px;width:604px;height:25px;background:#40444e;border-radius:2px"></div>
<svg style="left:1859.3px;top:325.1px" width="16" height="16"><path d="M12.9 1.9L5.4 9.3" stroke="#8b8b8b" stroke-width="2.7" stroke-linecap="round"/><path d="M4.7 10.2c1.2 1 1 2.8-0.2 3.8c-1.3 1-3.1 0.6-4.4-1.1c1.2 0.1 1.5-0.6 1.8-1.4c0.4-1.3 1.8-2.1 2.8-1.3z" fill="#8b8b8b"/></svg><span class="t" style="left:1881.24px;top:323.20px;color:#dadcdf;font-weight:700;letter-spacing:0.263px;">CanvasItem</span>
<div style="left:1610px;top:345px;width:604px;height:25px;background:#272b35;"></div>
<svg style="left:1615px;top:351.7px;" width="7" height="10"><path d="M1.9 1.7l3.3 3.3l-3.3 3.3" fill="none" stroke="#8b8e94" stroke-width="2.1" stroke-linecap="round" stroke-linejoin="round"/></svg>
<span class="t" style="left:1626.20px;top:347.80px;color:#dadcdf;font-weight:700;letter-spacing:0.105px;">Visibility</span>
<div style="left:1610px;top:370px;width:604px;height:25px;background:#272b35;"></div>
<svg style="left:1615px;top:376.7px;" width="7" height="10"><path d="M1.9 1.7l3.3 3.3l-3.3 3.3" fill="none" stroke="#8b8e94" stroke-width="2.1" stroke-linecap="round" stroke-linejoin="round"/></svg>
<span class="t" style="left:1626.20px;top:372.80px;color:#dadcdf;font-weight:700;letter-spacing:0.234px;">Ordering</span>
<div style="left:1610px;top:395px;width:604px;height:25px;background:#272b35;"></div>
<svg style="left:1615px;top:401.7px;" width="7" height="10"><path d="M1.9 1.7l3.3 3.3l-3.3 3.3" fill="none" stroke="#8b8e94" stroke-width="2.1" stroke-linecap="round" stroke-linejoin="round"/></svg>
<span class="t" style="left:1626.20px;top:397.80px;color:#dadcdf;font-weight:700;letter-spacing:0.266px;">Texture</span>
<div style="left:1610px;top:420px;width:604px;height:25px;background:#272b35;"></div>
<svg style="left:1612.8px;top:428.7px;" width="10" height="8"><path d="M1.7 2.3l3.3 3.3l3.3-3.3" fill="none" stroke="#8b8e94" stroke-width="2.1" stroke-linecap="round" stroke-linejoin="round"/></svg>
<span class="t" style="left:1626.20px;top:422.80px;color:#dadcdf;font-weight:700;letter-spacing:0.580px;">Material</span>
<div style="left:1622px;top:445px;width:592px;height:468px;background:#47739c;border-radius:2px"></div>
<div style="left:1624px;top:477.6px;width:588px;height:433.4px;background:#2a3441;"></div>
<div style="left:1624px;top:477.6px;width:588px;height:2.2px;background:#252a34;"></div>
<div style="left:1624px;top:477.6px;width:2px;height:152.4px;background:#252a34;"></div>
<div style="left:2210px;top:477.6px;width:2px;height:152.4px;background:#252a34;"></div>
<div style="left:1918px;top:445.2px;width:270px;height:30.6px;background:#1f232b;border-radius:3px 0 0 3px"></div>
<div style="left:2188px;top:445.2px;width:26px;height:30.6px;background:#23272f;border-radius:0 3px 3px 0"></div>
<span class="t" style="left:1629.80px;top:451.00px;color:#e6e8eb;letter-spacing:0.398px;">Material</span>
<svg style="left:1894.3px;top:452.7px;" width="16" height="16"><path d="M3.15 8A4.85 4.85 0 1 1 8 12.85" fill="none" stroke="#e0e0e0" stroke-width="2.1" stroke-linecap="round"/><path d="M-0.1 8.1L5.6 7.8L2.7 11.7z" fill="#e0e0e0"/></svg>
<svg style="left:1925px;top:453px;" width="15" height="15"><defs><linearGradient id="rb" x1="0" y1="0" x2="0" y2="1"><stop offset="0" stop-color="#a8405e"/><stop offset="0.13" stop-color="#a8405e"/><stop offset="0.16" stop-color="#a0e840"/><stop offset="0.38" stop-color="#40f040"/><stop offset="0.52" stop-color="#20f0c0"/><stop offset="0.66" stop-color="#20b8ff"/><stop offset="0.8" stop-color="#4030ff"/><stop offset="0.9" stop-color="#9040c8"/><stop offset="1" stop-color="#9040c8"/></linearGradient></defs><path d="M1.2 1.2h7.3l4.8 4.8v7.3h-12.1z" fill="none" stroke="url(#rb)" stroke-width="2.1" stroke-linejoin="round"/><path d="M8.2 2.2v4.2h5.2z" fill="#58ee44"/></svg>
<span class="t" style="left:2012.18px;top:451.60px;color:#6cb9f5;letter-spacing:0.232px;">ShaderMaterial</span>
<svg style="left:2196px;top:457.7px;" width="10" height="8"><path d="M1.4 1.6l3.6 3.6l3.6-3.6" fill="none" stroke="#b9bbbe" stroke-width="2" stroke-linecap="round" stroke-linejoin="round"/></svg>
<div style="left:1626px;top:479.8px;width:584px;height:150.2px;background-color:#575c67;background-image:conic-gradient(#575c67 25%,#9b9ea7 0 50%,#575c67 0 75%,#9b9ea7 0);background-size:32px 32px;background-position:0 0.2px"></div>
<svg style="left:1843px;top:479.8px;overflow:hidden" width="150" height="150.2"><rect width="150" height="151" fill="#7822ff"/><path fill="#637dff" d="M-23.90 0L-17.90 0L-32.90 150L-38.90 150ZM-8.90 0L-2.90 0L-17.90 150L-23.90 150ZM6.10 0L12.10 0L-2.90 150L-8.90 150ZM21.10 0L27.10 0L12.10 150L6.10 150ZM36.10 0L42.10 0L27.10 150L21.10 150ZM51.10 0L57.10 0L42.10 150L36.10 150ZM66.10 0L72.10 0L57.10 150L51.10 150ZM81.10 0L87.10 0L72.10 150L66.10 150ZM96.10 0L102.10 0L87.10 150L81.10 150ZM111.10 0L117.10 0L102.10 150L96.10 150ZM126.10 0L132.10 0L117.10 150L111.10 150ZM141.10 0L147.10 0L132.10 150L126.10 150ZM156.10 0L162.10 0L147.10 150L141.10 150ZM171.10 0L177.10 0L162.10 150L156.10 150ZM186.10 0L192.10 0L177.10 150L171.10 150Z"/></svg>
<div style="left:1626px;top:630px;width:584.2px;height:64px;background:#56549a;border-radius:2px"></div>
<div style="left:1628px;top:662.8px;width:580px;height:29px;background:#2d3240;"></div>
<span class="t" style="left:1633.80px;top:636.40px;color:#e6e8eb;letter-spacing:0.013px;">Shader</span>
<svg style="left:1894.3px;top:638px;" width="16" height="16"><path d="M3.15 8A4.85 4.85 0 1 1 8 12.85" fill="none" stroke="#e0e0e0" stroke-width="2.1" stroke-linecap="round"/><path d="M-0.1 8.1L5.6 7.8L2.7 11.7z" fill="#e0e0e0"/></svg>
<div style="left:1918px;top:630.3px;width:265.8px;height:30.7px;border:2px solid #6fbdfb;border-radius:3px;background:#1f232b"></div>
<div style="left:2184px;top:630.3px;width:26.2px;height:32.5px;background:#23272f;"></div>
<svg style="left:1925px;top:638.2px;" width="14" height="14"><path d="M1 1h7.6l4.4 4.4v7.6h-12z" fill="#1b1f27" stroke="#7cc4ff" stroke-width="2" stroke-linejoin="round"/><path d="M8.3 1v5h5z" fill="#7cc4ff"/><rect x="3" y="2.8" width="3.2" height="1.3" fill="#d04560"/><rect x="3" y="5.3" width="2" height="1.3" fill="#ffca5f"/><rect x="5.6" y="5.3" width="2.4" height="1.3" fill="#c5ef5f"/><rect x="3" y="7.6" width="4" height="1.3" fill="#5fffa5"/><rect x="7.6" y="7.6" width="3.2" height="1.3" fill="#5fc8ff"/><rect x="3" y="9.9" width="3" height="1.3" fill="#ff5fc8"/><rect x="6.6" y="9.9" width="2.4" height="1.3" fill="#9f5fff"/></svg>
<span class="t" style="left:2009.95px;top:637.00px;color:#6cb9f5;letter-spacing:0.233px;">scroll.gdshader</span>
<svg style="left:2191.6px;top:642.9px;" width="10" height="8"><path d="M1.4 1.6l3.6 3.6l3.6-3.6" fill="none" stroke="#b9bbbe" stroke-width="2" stroke-linecap="round" stroke-linejoin="round"/></svg>
<div style="left:1632px;top:664.5px;width:572px;height:25.4px;background:#2d3240;"></div>
<svg style="left:1635px;top:671.9px;" width="7" height="10"><path d="M1.9 1.7l3.3 3.3l-3.3 3.3" fill="none" stroke="#8b8e94" stroke-width="2.1" stroke-linecap="round" stroke-linejoin="round"/></svg>
<span class="t" style="left:1646.20px;top:668.00px;color:#dadcdf;font-weight:700;letter-spacing:-0.201px;">Resource</span>
<span class="t" style="left:2199.00px;top:668.00px;color:#6d7179;letter-spacing:-0.594px;">)</span>
<svg style="left:2152.9px;top:663.5px" width="50" height="27.6"><text class="cj" x="4" y="18" fill="#6d7179">处改动</text></svg>
<span class="t" style="left:2141.08px;top:668.00px;color:#6d7179;letter-spacing:-0.289px;">(1</span>
<div style="left:1624px;top:694px;width:588px;height:24.8px;background:#2d3340;"></div>
<div style="left:1627.5px;top:694px;width:300px;height:24.8px;background:#2d3340;"></div>
<svg style="left:1629px;top:703.1px;" width="10" height="8"><path d="M1.7 2.3l3.3 3.3l3.3-3.3" fill="none" stroke="#8b8e94" stroke-width="2.1" stroke-linecap="round" stroke-linejoin="round"/></svg>
<span class="t" style="left:1642.40px;top:697.20px;color:#dadcdf;font-weight:700;letter-spacing:0.134px;">Shader Parameters</span>
<div style="left:1924.6px;top:719.2px;width:285.6px;height:27.5px;background:#1e222a;border-radius:3px"></div>
<div style="left:1930px;top:724px;width:274px;height:18px;background:#637dff;"></div>
<div style="left:1924.6px;top:751px;width:285.6px;height:27.7px;background:#1e222a;border-radius:3px"></div>
<div style="left:1930px;top:756px;width:274px;height:18px;background:#7822ff;"></div>
<div style="left:1924.6px;top:783px;width:285.6px;height:30.6px;background:#1e222a;border-radius:3px"></div>
<div style="left:1924.6px;top:818px;width:285.6px;height:31px;background:#1e222a;border-radius:3px"></div>
<div style="left:1924.6px;top:853px;width:285.6px;height:31px;background:#1e222a;border-radius:3px"></div>
<span class="t" style="left:1646.10px;top:723.30px;color:#b1b4b9;letter-spacing:0.065px;">Color 1</span>
<svg style="left:1900.2px;top:725.2px;" width="16" height="16"><path d="M3.15 8A4.85 4.85 0 1 1 8 12.85" fill="none" stroke="#e0e0e0" stroke-width="2.1" stroke-linecap="round"/><path d="M-0.1 8.1L5.6 7.8L2.7 11.7z" fill="#e0e0e0"/></svg>
<span class="t" style="left:1646.10px;top:755.40px;color:#b1b4b9;letter-spacing:0.065px;">Color 2</span>
<svg style="left:1900.2px;top:757.2px;" width="16" height="16"><path d="M3.15 8A4.85 4.85 0 1 1 8 12.85" fill="none" stroke="#e0e0e0" stroke-width="2.1" stroke-linecap="round"/><path d="M-0.1 8.1L5.6 7.8L2.7 11.7z" fill="#e0e0e0"/></svg>
<span class="t" style="left:1646.10px;top:788.90px;color:#b1b4b9;letter-spacing:0.275px;">Tilt Angle</span>
<span class="t" style="left:1646.10px;top:824.00px;color:#b1b4b9;letter-spacing:0.091px;">Times</span>
<span class="t" style="left:1646.10px;top:859.00px;color:#b1b4b9;letter-spacing:-0.138px;">Scroll Speed</span>
<span class="t" style="left:1940.40px;top:788.90px;color:#d6d8db;letter-spacing:-0.078px;">1.0</span>
<span class="t" style="left:1940.40px;top:823.80px;color:#d6d8db;letter-spacing:0.008px;">10</span>
<span class="t" style="left:1940.40px;top:859.00px;color:#d6d8db;letter-spacing:-0.078px;">3.0</span>
<svg style="left:2190px;top:825px;" width="12" height="17"><path d="M1.6 6.4l4.4-4.4l4.4 4.4M1.6 10.6l4.4 4.4l4.4-4.4" fill="none" stroke="#c9cbce" stroke-width="1.9" stroke-linecap="round" stroke-linejoin="round"/></svg>
<div style="left:1930px;top:878.3px;width:270px;height:1.6px;background:#43474f;border-radius:1px"></div>
<div style="left:1930px;top:878.1px;width:83px;height:2px;background:#b9bbbe;border-radius:1px"></div>
<div style="left:2010.8px;top:877px;width:4.2px;height:4.2px;background:#d0d2d4;"></div>
<div style="left:1624px;top:884px;width:588px;height:27px;background:#2d3340;"></div>
<div style="left:1627.5px;top:885px;width:300px;height:24.6px;background:#2d3340;"></div>
<svg style="left:1631px;top:891px;" width="7" height="10"><path d="M1.9 1.7l3.3 3.3l-3.3 3.3" fill="none" stroke="#8b8e94" stroke-width="2.1" stroke-linecap="round" stroke-linejoin="round"/></svg>
<span class="t" style="left:1642.20px;top:887.10px;color:#dadcdf;font-weight:700;letter-spacing:-0.201px;">Resource</span>
<span class="t" style="left:2202.80px;top:887.10px;color:#6d7179;letter-spacing:-0.594px;">)</span>
<svg style="left:2156.7px;top:882.6px" width="50" height="27.6"><text class="cj" x="4" y="18" fill="#6d7179">处改动</text></svg>
<span class="t" style="left:2144.88px;top:887.10px;color:#6d7179;letter-spacing:-0.289px;">(1</span>
<div style="left:1918px;top:917px;width:296px;height:30.6px;background:#1c2028;border-radius:3px"></div>
<span class="t" style="left:1629.80px;top:923.00px;color:#b1b4b9;letter-spacing:0.144px;">Use Parent Material</span>
<div style="left:1925px;top:925.2px;width:14px;height:14px;background:#40444e;border-radius:3px"></div>
<svg style="left:1944.4px;top:919.4px" width="36" height="27.6"><text class="cj" x="4" y="18" fill="#d6d8db">启用</text></svg>
<div style="left:1610px;top:948.2px;width:604px;height:24.8px;background:#40444e;border-radius:2px"></div>
<svg style="left:1882.4px;top:953.2px" width="16" height="16"><circle cx="8" cy="8" r="5.05" fill="none" stroke="#e0e0e0" stroke-width="2.2"/></svg><span class="t" style="left:1904.28px;top:951.40px;color:#dadcdf;font-weight:700;letter-spacing:0.340px;">Node</span>
<div style="left:1610px;top:973px;width:604px;height:25px;background:#272b35;"></div>
<svg style="left:1615px;top:979.7px;" width="7" height="10"><path d="M1.9 1.7l3.3 3.3l-3.3 3.3" fill="none" stroke="#8b8e94" stroke-width="2.1" stroke-linecap="round" stroke-linejoin="round"/></svg>
<span class="t" style="left:1626.20px;top:975.80px;color:#dadcdf;font-weight:700;letter-spacing:-0.422px;">Process</span>
<div style="left:1610px;top:998px;width:604px;height:25px;background:#272b35;"></div>
<svg style="left:1615px;top:1004.7px;" width="7" height="10"><path d="M1.9 1.7l3.3 3.3l-3.3 3.3" fill="none" stroke="#8b8e94" stroke-width="2.1" stroke-linecap="round" stroke-linejoin="round"/></svg>
<span class="t" style="left:1626.20px;top:1000.80px;color:#dadcdf;font-weight:700;letter-spacing:0.136px;">Physics Interpolation</span>
<div style="left:1610px;top:1023px;width:604px;height:25px;background:#272b35;"></div>
<svg style="left:1615px;top:1029.7px;" width="7" height="10"><path d="M1.9 1.7l3.3 3.3l-3.3 3.3" fill="none" stroke="#8b8e94" stroke-width="2.1" stroke-linecap="round" stroke-linejoin="round"/></svg>
<span class="t" style="left:1626.20px;top:1025.80px;color:#dadcdf;font-weight:700;letter-spacing:0.154px;">Auto Translate</span>
<div style="left:1610px;top:1048px;width:604px;height:25px;background:#272b35;"></div>
<svg style="left:1615px;top:1054.7px;" width="7" height="10"><path d="M1.9 1.7l3.3 3.3l-3.3 3.3" fill="none" stroke="#8b8e94" stroke-width="2.1" stroke-linecap="round" stroke-linejoin="round"/></svg>
<span class="t" style="left:1626.20px;top:1050.80px;color:#dadcdf;font-weight:700;letter-spacing:0.063px;">Editor Description</span>
<span class="t" style="left:1617.80px;top:1079.00px;color:#b1b4b9;letter-spacing:0.112px;">Script</span>
<div style="left:2188px;top:1073px;width:26px;height:31px;background:#252a34;border-radius:0 3px 3px 0"></div>
<svg style="left:2196px;top:1085.7px;" width="10" height="8"><path d="M1.4 1.6l3.6 3.6l3.6-3.6" fill="none" stroke="#b9bbbe" stroke-width="2" stroke-linecap="round" stroke-linejoin="round"/></svg>
<span class="t" style="left:2033.58px;top:1080.00px;color:#d6d8db;letter-spacing:-0.391px;">&lt;</span>
<svg style="left:2037.8px;top:1075.4px" width="22" height="27.6"><text class="cj" x="4" y="18" fill="#d6d8db">空</text></svg>
<span class="t" style="left:2056.00px;top:1080.00px;color:#d6d8db;letter-spacing:-0.391px;">&gt;</span>
<div style="left:1834.3px;top:1108.1px;width:155.8px;height:30.4px;background:#2e333e;border-radius:3px"></div>
<svg style="left:1841px;top:1116px;" width="14" height="14"><path d="M7 0.8v12.4M0.8 7h12.4" stroke="#e8e8e8" stroke-width="1.9"/></svg>
<svg style="left:1884.2px;top:1110.8px" width="78" height="27.6"><text class="cj" x="4" y="18" fill="#d4d6d9">添加元数据</text></svg>
<div style="left:2222px;top:0px;width:7px;height:1167px;background:#1d2229;"></div>
<div style="left:1598px;top:0px;width:4px;height:1167px;background:#1d2229;"></div>
</div></body></html>
